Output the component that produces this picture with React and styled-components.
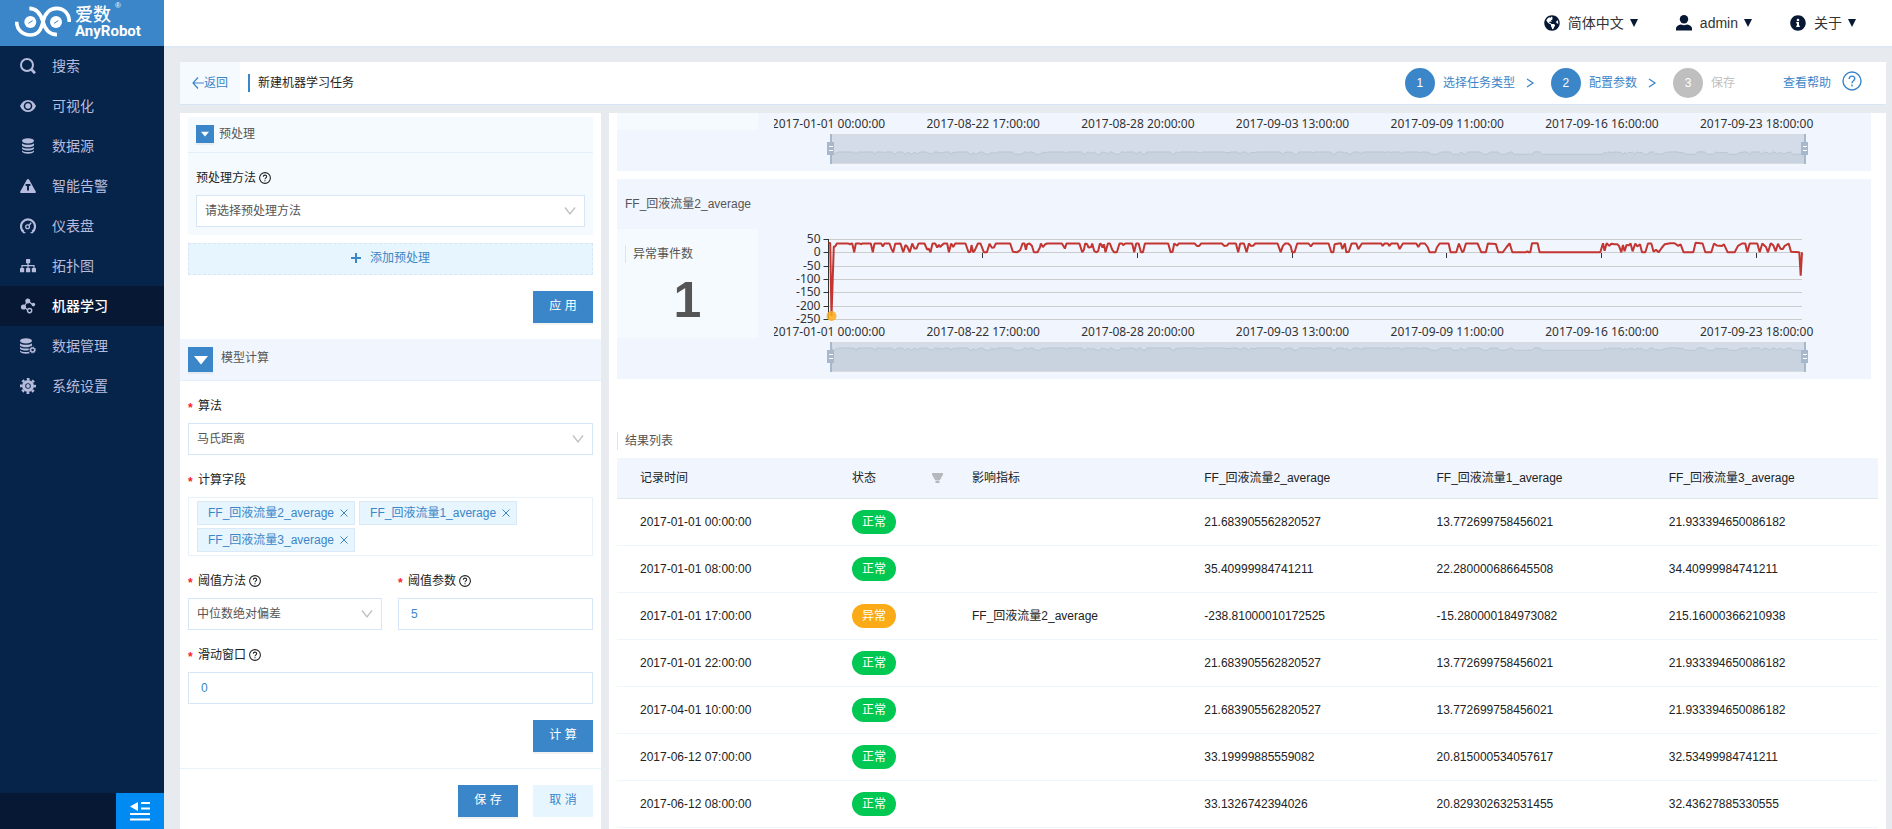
import React, { useLayoutEffect, useRef, useState } from "react";
import styled, { createGlobalStyle } from "styled-components";
import { FaGlobeAmericas, FaInfoCircle } from "react-icons/fa";

const blue = "#3b86c8";
const line = "#d6e6f7";
const pale = "#f1f6fe";
const mint = "#f4fafd";
const sky = "#e7f5fe";

const GlobalStyle = createGlobalStyle`
  *, *::before, *::after { box-sizing: border-box; }
  html, body, #root { height: 100%; }
  body {
    margin: 0;
    overflow: hidden;
    background: #e7eaef;
    color: #222;
    font: 12px/18px "Liberation Sans", "Noto Sans CJK SC", sans-serif;
  }
  button, input, select { font: inherit; margin: 0; border-radius: 0; outline: none; }
  button { cursor: pointer; }
  a { color: inherit; text-decoration: none; }
  svg { display: block; flex: none; }
`;

const Page = styled.div`
  display: grid;
  grid-template-columns: 164px minmax(0, 1fr);
  height: 100%;
`;

/* ---------- sidebar ---------- */

const Sidebar = styled.aside`
  display: flex;
  flex-direction: column;
  background: #062349;
`;

const Brand = styled.a`
  display: flex;
  gap: 4px;
  height: 46px;
  padding: 6px 0 0 15px;
  background: ${blue};
  color: #fff;
`;

const BrandText = styled.span`
  display: flex;
  flex-direction: column;
  font-weight: 700;
`;

const BrandCn = styled.span`
  display: flex;
  gap: 4px;
  font-size: 18px;
  line-height: 18px;
  font-weight: 500;
`;

const Reg = styled.sup`
  font-size: 8px;
  line-height: 1;
  margin-top: -4px;
  font-weight: 400;
`;

const BrandEn = styled.span`
  font-family: Roboto, "Liberation Sans", sans-serif;
  font-size: 15px;
  line-height: 15px;
`;

const Menu = styled.nav`
  display: flex;
  flex-direction: column;
  flex: 1;
`;

const MenuItem = styled.a`
  display: flex;
  align-items: center;
  gap: 16px;
  height: 40px;
  padding-left: 20px;
  font-size: 14px;
  line-height: 20px;
  color: ${(p) => (p.$active ? "#fff" : "#b7bcdc")};
  background: ${(p) => (p.$active ? "#061833" : "transparent")};
  font-weight: ${(p) => (p.$active ? 500 : 400)};
  svg { color: #b7bcdc; }
`;

const SidebarFoot = styled.div`
  display: flex;
  justify-content: flex-end;
  height: 36px;
  background: #061833;
`;

const Collapse = styled.button`
  display: flex;
  justify-content: center;
  align-items: center;
  width: 48px;
  border: 0;
  padding: 0;
  background: #008af2;
  color: #fff;
`;

/* ---------- main frame ---------- */

const Main = styled.main`
  display: flex;
  flex-direction: column;
  min-width: 0;
  min-height: 0;
`;

const TopBar = styled.header`
  display: flex;
  align-items: center;
  justify-content: flex-end;
  gap: 38px;
  height: 46px;
  flex: none;
  padding-right: 36px;
  background: #fff;
  box-shadow: 0 2px 0 #dfe9f4;
`;

const TopLink = styled.button`
  display: flex;
  align-items: center;
  gap: 8px;
  border: 0;
  padding: 0;
  background: none;
  font-size: 14px;
  line-height: 20px;
  color: #333;
  svg { color: #061833; }
`;

const Caret = styled.span`
  border: 4px solid transparent;
  border-top: 8px solid #061833;
  border-bottom: 0;
  margin-left: -2px;
`;

const Body = styled.div`
  display: flex;
  flex-direction: column;
  gap: 8px;
  flex: 1;
  min-height: 0;
  padding: 16px 6px 0 16px;
`;

const TaskBar = styled.div`
  display: flex;
  align-items: center;
  height: 43px;
  flex: none;
  padding-right: 24px;
  background: #fff;
  border-bottom: 1px solid ${line};
`;

const Back = styled.a`
  display: flex;
  align-items: center;
  align-self: stretch;
  width: 60px;
  padding-left: 12px;
  background: ${mint};
  color: ${blue};
`;

const TaskTitle = styled.h1`
  flex: 1;
  margin: 0 0 0 8px;
  padding-left: 8px;
  border-left: 2px solid ${blue};
  font-size: 12px;
  font-weight: 400;
  line-height: 18px;
`;

const Steps = styled.ol`
  display: flex;
  gap: 16px;
  margin: 0 48px 0 0;
  padding: 0;
  list-style: none;
`;

const Step = styled.li`
  display: flex;
  align-items: center;
  gap: 8px;
  color: ${(p) => (p.$off ? "#bfbfbf" : blue)};
  > svg { margin-left: 2px; }
`;

const StepNumber = styled.span`
  width: 30px;
  border-radius: 50%;
  background: ${(p) => (p.$off ? "#bfbfbf" : blue)};
  color: #fff;
  text-align: center;
  line-height: 30px;
`;

const HelpLink = styled.a`
  display: flex;
  align-items: center;
  gap: 11px;
  color: ${blue};
  svg { margin-bottom: 4px; }
`;

const Columns = styled.div`
  display: grid;
  grid-template-columns: 421px minmax(0, 1fr);
  gap: 8px;
  flex: 1;
  min-height: 0;
`;

/* ---------- settings column ---------- */

const Settings = styled.form`
  overflow: hidden;
  background: #fff;
  padding-top: 4px;
`;

const PreCard = styled.section`
  margin: 0 8px;
  padding-bottom: 8px;
  background: ${mint};
`;

const SectionTitle = styled.h2`
  margin: 0;
  font-size: 12px;
  font-weight: 400;
  line-height: 18px;
`;

const SectionHead = styled.header`
  display: flex;
  gap: ${(p) => (p.$large ? 8 : 5)}px;
  height: ${(p) => (p.$large ? 42 : 36)}px;
  padding: 8px;
  background: ${(p) => (p.$large ? pale : "transparent")};
  border-bottom: 1px solid #e4effa;
  color: #555;
  ${SectionTitle} { line-height: ${(p) => (p.$large ? 22 : 18)}px; }
`;

const Toggle = styled.button`
  display: grid;
  place-items: center;
  width: ${(p) => p.$size}px;
  height: ${(p) => p.$size}px;
  border: 0;
  padding: 0;
  background: ${blue};
  box-shadow: 0 2px 0 rgba(0, 0, 0, 0.05);
  color: #fff;
`;

const Field = styled.div`
  display: flex;
  flex-direction: column;
  gap: 8px;
  padding: 16px 8px 0;
  min-width: 0;
`;

const FieldLabel = styled.label`
  display: flex;
  align-items: center;
  gap: 3px;
  height: 18px;
  &::before {
    content: "*";
    display: ${(p) => (p.$required ? "block" : "none")};
    width: 7px;
    height: 14px;
    font-weight: 700;
    color: #f5222d;
  }
`;

const SelectBox = styled.div`
  display: grid;
  align-items: center;
  > * { grid-area: 1 / 1; }
  svg { justify-self: end; margin-right: 9px; color: #bfbfbf; pointer-events: none; }
`;

const Select = styled.select`
  width: 100%;
  height: 32px;
  padding: 0 24px 0 8px;
  border: 1px solid ${line};
  background: #fff;
  color: #555;
  appearance: none;
`;

const Input = styled.input`
  width: 100%;
  height: 32px;
  padding: 0 12px;
  border: 1px solid ${line};
  background: #fff;
  color: ${blue};
`;

const Tags = styled.div`
  display: flex;
  flex-wrap: wrap;
  gap: 3px 4px;
  padding: 3px 8px;
  border: 1px solid #e7f2fa;
`;

const Tag = styled.span`
  display: flex;
  align-items: center;
  height: 24px;
  padding: 0 6px 0 10px;
  gap: 6px;
  border: 1px solid #d9e9f8;
  background: ${sky};
  color: ${blue};
`;

const TagClose = styled.button`
  border: 0;
  padding: 0;
  background: none;
  color: ${blue};
`;

const HalfFields = styled.div`
  display: grid;
  grid-template-columns: 210px minmax(0, 1fr);
  > :first-child { padding-right: 8px; }
`;

const AddButton = styled.button`
  display: flex;
  align-items: center;
  justify-content: center;
  gap: 9px;
  width: calc(100% - 16px);
  height: 32px;
  margin: 8px 8px 0;
  padding-bottom: 3px;
  border: 1px dashed ${line};
  background: ${sky};
  color: ${blue};
`;

const Actions = styled.div`
  display: flex;
  justify-content: flex-end;
  gap: 15px;
  padding: 16px 8px;
  border-top: ${(p) => (p.$ruled ? `1px solid #e7f4f9` : "0")};
`;

const Button = styled.button`
  width: 60px;
  height: 32px;
  border: 0;
  padding: 0 0 3px;
  background: ${(p) => (p.$light ? sky : blue)};
  box-shadow: ${(p) => (p.$light ? "none" : "0 2px 0 rgba(0, 0, 0, 0.05)")};
  color: ${(p) => (p.$light ? blue : "#fff")};
`;

/* ---------- results column ---------- */

const Results = styled.div`
  overflow: hidden;
  padding: 0 8px;
  background: #fff;
`;

const ChartCard = styled.section`
  margin: 0 7px 8px 0;
  background: ${pale};
`;

const ChartTitle = styled.h3`
  margin: 0;
  padding: 16px 8px;
  font-size: 12px;
  font-weight: 400;
  line-height: 18px;
  color: #555;
`;

const ChartRow = styled.div`
  display: grid;
  grid-template-columns: 141px minmax(0, 1fr);
  gap: 16px;
  align-items: start;
`;

const Stat = styled.div`
  height: ${(p) => p.$height}px;
  background: ${mint};
  padding: 0 8px;
`;

const Caption = styled.h3`
  margin: ${(p) => (p.$list ? "53px 0 8px" : "0 0 12px")};
  padding-left: 7px;
  border-left: 1px solid ${line};
  font-size: 12px;
  font-weight: 400;
  line-height: 18px;
  color: #555;
`;

const StatBody = styled(Stat)`
  padding-top: 16px;
`;

const StatValue = styled.strong`
  display: block;
  text-align: center;
  font-size: 50px;
  line-height: 50px;
  color: #555;
`;

const ChartFrame = styled.div`
  min-width: 0;
  svg text {
    font: 12px "Noto Sans", sans-serif;
    fill: #333;
  }
`;

const Table = styled.table`
  width: 100%;
  table-layout: fixed;
  border-collapse: collapse;
  th, td {
    padding: 0 23px;
    text-align: left;
    font-weight: 400;
    white-space: nowrap;
  }
  th {
    height: 40px;
    background: ${pale};
    border-bottom: 1px solid #dfe6ea;
  }
  td {
    height: 47px;
    border-bottom: 1px solid #ecf6fb;
  }
`;

const Col = styled.col`
  width: ${(p) => p.$width}px;
`;

const HeadCell = styled.div`
  display: flex;
  align-items: center;
  justify-content: space-between;
  margin-right: -18px;
`;

const Pill = styled.span`
  display: block;
  width: 44px;
  border-radius: 12px;
  background: ${(p) => (p.$bad ? "#fbab17" : "#00c853")};
  color: #fff;
  text-align: center;
  line-height: 24px;
`;

/* ---------- icons ---------- */

const Icon = ({ size = 16, box = 16, children, ...rest }) => (
  <svg width={size} height={size} viewBox={`0 0 ${box} ${box}`} fill="currentColor" aria-hidden="true" {...rest}>
    {children}
  </svg>
);

const Stroke = (p) => <Icon fill="none" stroke="currentColor" {...p} />;

const SearchIcon = () => (
  <Stroke strokeWidth="2"><circle cx="7" cy="7" r="6" /><path d="M11.4 11.4l3.600 3.800" strokeWidth="2.800" /></Stroke>
);
const EyeIcon = () => (
  <Icon>
    <path fillRule="evenodd" d="M0 8c1.800-4 4.700-6 8-6s6.200 2 8 6c-1.800 4-4.700 6-8 6S1.800 12 0 8zm8-4.300a4.300 4.300 0 100 8.600 4.300 4.300 0 000-8.600z" />
    <circle cx="8" cy="8" r="2.700" />
  </Icon>
);
const Disks = () => (
  <>
    <ellipse cx="8" cy="2.800" rx="6" ry="2.600" />
    <path d="M2 5.200c1.800 2 10.200 2 12 0v2.200c-1.500 2.400-10.500 2.400-12 0zM2 9c1.800 2 10.200 2 12 0v1.800c-1.500 2.400-10.500 2.400-12 0zM2 12.400c1.800 2 10.200 2 12 0v1.400c-1.500 2.600-10.500 2.600-12 0z" />
  </>
);
const DataIcon = () => <Icon><Disks /></Icon>;
const AlertIcon = () => (
  <Icon><path fillRule="evenodd" d="M8 1c.6 0 .9.300 1.200.8l6.500 11.700c.5.900 0 1.500-.9 1.500H1.200c-.9 0-1.400-.6-.9-1.500L6.800 1.800C7.100 1.300 7.400 1 8 1zM5.600 6v2H7v4.500h2V8h1.400V6z" /></Icon>
);
const GaugeIcon = () => (
  <Stroke strokeWidth="2.200">
    <path d="M3.800 14A7 7 0 1112.200 14" />
    <circle cx="7.600" cy="8.800" r="1.900" strokeWidth="1.300" />
    <path d="M8.800 7.600l2.400-2.800" strokeWidth="1.400" />
    <path d="M3 14.600h2.400M10.600 14.600H13" strokeWidth="1.200" />
  </Stroke>
);
const TreeIcon = () => (
  <Icon>
    <rect x="6" y="1" width="4.200" height="4.200" rx=".5" />
    <rect x="0" y="10" width="4.200" height="4.200" rx=".5" />
    <rect x="6" y="10" width="4.200" height="4.200" rx=".5" />
    <rect x="11.800" y="10" width="4.200" height="4.200" rx=".5" />
    <path d="M8 5v5M2 10V7.600h12V10" fill="none" stroke="currentColor" strokeWidth="1.200" />
  </Icon>
);
const LearnIcon = () => (
  <Icon>
    <path d="M8 3L3.500 9M8 3l5.200 4M3.500 9l6 4" fill="none" stroke="currentColor" strokeWidth="1.200" />
    <circle cx="7.800" cy="3" r="2.500" />
    <circle cx="13.400" cy="6.600" r="1.800" />
    <circle cx="3.500" cy="9" r="2.600" />
    <circle cx="9.600" cy="12.600" r="2.100" fill="#061833" stroke="currentColor" strokeWidth="1.400" />
  </Icon>
);
const DataGearIcon = () => (
  <Icon>
    <g transform="translate(-2 0)"><Disks /></g>
    <circle cx="12.600" cy="12" r="4" fill="#062349" />
    <circle cx="12.600" cy="12" r="2" fill="none" stroke="currentColor" strokeWidth="1.400" />
    <circle cx="12.600" cy="12" r="3" fill="none" stroke="currentColor" strokeWidth=".9" strokeDasharray="1.200 1.150" />
  </Icon>
);
const GearIcon = () => (
  <Icon>
    <circle cx="8" cy="8" r="4.400" fill="none" stroke="currentColor" strokeWidth="3.200" />
    <circle cx="8" cy="8" r="6.900" fill="none" stroke="currentColor" strokeWidth="2.200" strokeDasharray="2.800 2.619" strokeDashoffset="1.400" />
    <circle cx="8" cy="8" r="1.900" />
  </Icon>
);
const UserIcon = () => (
  <Icon><circle cx="8" cy="4.200" r="4.200" /><path d="M0 15.600v-2.200C0 11.400 2 10 5 9.400c1.800 1 4.200 1 6 0 3 .6 5 2 5 4v2.200z" /></Icon>
);
const Help = ({ size = 12 }) => (
  <Stroke size={size} box={20} strokeWidth={size > 12 ? 1.4 : 1.8}>
    <circle cx="10" cy="10" r="9" />
    <path d="M7.200 8c0-3.800 5.600-3.600 5.600-.4 0 2.200-2.800 2.200-2.800 4.600" />
    <path d="M10 13.600v1.800" />
  </Stroke>
);
const Chevron = () => <Stroke size={10} box={10} strokeWidth="1.300"><path d="M2 1l6 4-6 4" /></Stroke>;
const Down = () => <Stroke size={12} box={12} strokeWidth="1.300"><path d="M1 2.500l5 6.500 5-6.500" /></Stroke>;
const Arrow = () => <Stroke size={12} box={12} strokeWidth="1.200"><path d="M6 0.500L1 6l5 5.500M1 6h11" /></Stroke>;
const Plus = () => <Stroke size={10} box={10} strokeWidth="2"><path d="M5 0v10M0 5h10" /></Stroke>;
const Cross = () => <Stroke size={8} box={8} strokeWidth="1"><path d="M.5 .5l7 7M7.500 .5l-7 7" /></Stroke>;
const Triangle = ({ size }) => <Icon size={size} box={14}><path d="M0 3h14L7 11.500z" /></Icon>;
const Funnel = () => (
  <Icon size={12} box={12} color="#b5b8bd"><path d="M0 1h11v1.500L8 8H3L0 2.500zM3.500 8.500h4V11h-4z" /></Icon>
);
const FoldIcon = () => (
  <svg width="20" height="20" viewBox="0 0 20 20" fill="currentColor" aria-hidden="true">
    <path d="M0 5.500L8 1v9zM11 1h9v2h-9zM11 6.500h9v2h-9zM0 12h20v2H0zM0 17.500h20v2H0z" />
  </svg>
);

const Logo = () => (
  <svg width="56" height="32" viewBox="45 18 168 96" fill="none" stroke="#fff" strokeWidth="11" aria-hidden="true">
    <path d="M50 65c0 22 16 40 40 40 26 0 34-18 39-40 5-24 20-40 41-40 22 0 38 16 38 41" />
    <path d="M88 25c22 0 34 16 41 40 6 24 18 39 42 39" />
    <circle cx="91" cy="66" r="18" fill="#fff" stroke="none" />
    <circle cx="168" cy="66" r="18" fill="#fff" stroke="none" />
    <path d="M85 70l13-8M162 70l13-8" stroke={blue} strokeWidth="3" />
  </svg>
);

/* ---------- chart ---------- */

const SPAN = 2920;
const T = 33;
const SERIES = [
  0,35,5,35,9,-238.8,16,22,20,22,25,T,60,T,64,30,68,T,71,T,77,0,82,T,94,T,98,30,101,T,127,T,133,0,138,T,158,T,163,22,168,T,183,T,
  189,12,194,0,200,32,216,T,224,0,231,27,236,22,244,0,251,T,258,14,264,14,270,T,288,T,296,10,300,14,306,0,312,T,320,T,326,18,331,28,
  335,20,340,27,346,T,356,T,361,0,368,T,374,20,380,T,411,T,420,0,426,2,429,27,434,0,439,8,448,T,456,T,466,0,475,0,483,32,490,17,
  496,18,502,T,545,T,553,2,565,0,575,8,582,T,588,T,592,10,596,30,603,T,610,25,616,0,627,0,634,18,637,T,643,20,650,30,656,T,700,T,
  709,14,714,T,753,T,761,0,766,10,770,T,776,30,780,18,788,20,791,T,797,5,804,0,809,5,814,T,818,30,822,18,826,30,831,0,838,T,844,T,
  851,10,857,0,865,0,873,T,880,T,884,27,890,T,911,T,917,0,923,T,930,T,937,0,943,0,949,T,1019,T,1026,0,1032,2,1037,T,1046,25,1050,T,
  1098,T,1105,24,1112,24,1118,T,1180,T,1187,24,1196,26,1200,T,1222,T,1229,0,1235,T,1246,T,1254,0,1261,T,1267,24,1275,26,1280,T,
  1347,T,1356,0,1363,24,1370,T,1379,T,1386,24,1391,0,1398,0,1406,T,1440,T,1447,22,1453,T,1475,T,1500,T,1508,0,1514,0,1518,30,1530,T,
  1537,34,1541,12,1549,T,1553,0,1561,2,1569,T,1583,T,1589,12,1600,T,1658,T,1662,24,1668,T,1678,T,1682,24,1688,T,1707,T,1713,12,
  1723,T,1763,T,1769,20,1775,T,1789,T,1797,20,1803,0,1820,0,1825,18,1833,T,1860,T,1866,0,1883,0,1891,T,1901,0,1905,4,1912,T,1947,T,
  1958,0,1972,0,1978,T,2002,31,2009,0,2023,0,2034,20,2043,34,2051,0,2092,0,2096,4,2101,0,2105,0,2110,34,2127,34,2133,0,2315,0,
  2323,34,2328,6,2334,34,2342,24,2348,32,2358,30,2366,30,2371,24,2378,0,2383,28,2388,4,2394,28,2400,26,2406,T,2412,4,2420,T,2426,22,
  2434,30,2440,0,2450,0,2458,T,2468,T,2475,2,2482,10,2490,0,2500,18,2508,30,2525,34,2538,34,2549,24,2556,30,2565,0,2594,0,2601,36,
  2622,T,2630,0,2648,0,2656,T,2664,26,2680,24,2686,30,2697,0,2718,0,2728,24,2740,T,2750,T,2756,0,2763,T,2786,T,2793,0,2801,T,
  2812,20,2818,0,2826,34,2834,26,2841,4,2848,32,2856,12,2862,12,2868,24,2880,T,2887,2,2912,0,2916,-88,2920,0,
];
const POINTS = [];
for (let i = 0; i < SERIES.length; i += 2) POINTS.push([SERIES[i] / SPAN, SERIES[i + 1]]);

const TIMES = [
  "2017-01-01 00:00:00", "2017-08-22 17:00:00", "2017-08-28 20:00:00", "2017-09-03 13:00:00",
  "2017-09-09 11:00:00", "2017-09-16 16:00:00", "2017-09-23 18:00:00",
];
const LEVELS = [50, 0, -50, -100, -150, -200, -250];
const TICK_STEP = 0.1589;

function Handle({ x }) {
  return (
    <g>
      <path d={`M${x} 113v30`} stroke="#a7b7cc" strokeWidth="2" />
      <rect x={x - 4} y="121" width="7" height="13" fill="#a7b7cc" />
      <path d={`M${x - 2} 125.500h4M${x - 2} 129.500h4`} stroke="#fff" />
    </g>
  );
}

function Chart({ tail = false, level }) {
  const frame = useRef(null);
  const [width, setWidth] = useState(1097);
  useLayoutEffect(() => {
    const measure = () => setWidth(frame.current.clientWidth);
    measure();
    const watcher = new ResizeObserver(measure);
    watcher.observe(frame.current);
    return () => watcher.disconnect();
  }, []);

  const top = tail ? 92 : 0;
  const left = 54.5;
  const right = width - 69;
  const px = (f) => left + f * (right - left);
  const py = (v) => Math.round(10 + ((50 - v) * 80) / 300) + 0.5;
  const curve = POINTS.map(([f, v]) => `${px(f).toFixed(1)},${(10 + ((50 - v) * 80) / 300).toFixed(1)}`).join(" ");
  const mini = POINTS.map(([f, v]) => `${(px(f) + 2).toFixed(1)},${(113 + level + (T - Math.max(v, -10)) * 0.07).toFixed(1)}`).join(" ");

  return (
    <ChartFrame ref={frame}>
      <svg width={width} height={150 - top} viewBox={`0 ${top} ${width} ${150 - top}`} role="img" aria-label="流量趋势">
        {!tail && (
          <g>
            {LEVELS.map((v) => (
              <g key={v}>
                <path d={`M${left} ${py(v)}H${right}`} stroke="#ccc" />
                <path d={`M${left - 5} ${py(v)}h5`} stroke="#333" />
                <text x={left - 8} y={py(v) + 3} textAnchor="end">{v}</text>
              </g>
            ))}
            <path d={`M${left} 10V91`} stroke="#333" />
            {TIMES.map((t, i) => <path key={t} d={`M${Math.round(px(i * TICK_STEP)) - 0.5} 24v5`} stroke="#333" />)}
            <polyline points={curve} fill="none" stroke="#c23531" strokeWidth="2" strokeLinejoin="bevel" />
            <circle cx={left + 3} cy="87" r="5" fill="#fbab17" fillOpacity=".85" />
          </g>
        )}
        {TIMES.map((t, i) => <text key={t} x={px(i * TICK_STEP)} y="107" textAnchor="middle">{t}</text>)}
        <rect x={left + 2} y="113" width={right - left + 2} height="30" fill="#d4dce9" />
        <polygon points={`${left + 2},142 ${mini} ${right + 2},142`} fill="#c8d3df" />
        <polyline points={mini} fill="none" stroke="#b9c6d4" strokeWidth="1" />
        <path d={`M${left + 2} 113.500H${right + 3}M${left + 2} 142.500H${right + 3}`} stroke="#d8dce0" />
        <Handle x={left + 2.5} />
        <Handle x={right + 3} />
      </svg>
    </ChartFrame>
  );
}

/* ---------- content ---------- */

const MENU = [
  ["搜索", SearchIcon], ["可视化", EyeIcon], ["数据源", DataIcon], ["智能告警", AlertIcon], ["仪表盘", GaugeIcon],
  ["拓扑图", TreeIcon], ["机器学习", LearnIcon], ["数据管理", DataGearIcon], ["系统设置", GearIcon],
];

const FIELDS = ["FF_回液流量2_average", "FF_回液流量1_average", "FF_回液流量3_average"];

const ROWS = [
  ["2017-01-01 00:00:00", "正常", "", "21.683905562820527", "13.772699758456021", "21.933394650086182"],
  ["2017-01-01 08:00:00", "正常", "", "35.40999984741211", "22.280000686645508", "34.40999984741211"],
  ["2017-01-01 17:00:00", "异常", "FF_回液流量2_average", "-238.81000010172525", "-15.280000184973082", "215.16000366210938"],
  ["2017-01-01 22:00:00", "正常", "", "21.683905562820527", "13.772699758456021", "21.933394650086182"],
  ["2017-04-01 10:00:00", "正常", "", "21.683905562820527", "13.772699758456021", "21.933394650086182"],
  ["2017-06-12 07:00:00", "正常", "", "33.19999885559082", "20.815000534057617", "32.53499984741211"],
  ["2017-06-12 08:00:00", "正常", "", "33.1326742394026", "20.829302632531455", "32.43627885330555"],
];

function SelectField({ id, label, value, required, help }) {
  return (
    <Field>
      <FieldLabel htmlFor={id} $required={required}>{label}{help && <Help />}</FieldLabel>
      <SelectBox>
        <Select id={id} defaultValue={value}><option>{value}</option></Select>
        <Down />
      </SelectBox>
    </Field>
  );
}

function InputField({ id, label, value }) {
  return (
    <Field>
      <FieldLabel htmlFor={id} $required>{label}<Help /></FieldLabel>
      <Input id={id} defaultValue={value} />
    </Field>
  );
}

export default function App() {
  return (
    <Page>
      <GlobalStyle />
      <Sidebar>
        <Brand href="#">
          <Logo />
          <BrandText>
            <BrandCn>爱数<Reg>®</Reg></BrandCn>
            <BrandEn>AnyRobot</BrandEn>
          </BrandText>
        </Brand>
        <Menu>
          {MENU.map(([name, Glyph]) => (
            <MenuItem key={name} href="#" $active={name === "机器学习"}><Glyph />{name}</MenuItem>
          ))}
        </Menu>
        <SidebarFoot><Collapse type="button" aria-label="收起菜单"><FoldIcon /></Collapse></SidebarFoot>
      </Sidebar>

      <Main>
        <TopBar>
          <TopLink type="button"><FaGlobeAmericas size={16} />简体中文<Caret /></TopLink>
          <TopLink type="button"><UserIcon />admin<Caret /></TopLink>
          <TopLink type="button"><FaInfoCircle size={16} />关于<Caret /></TopLink>
        </TopBar>

        <Body>
          <TaskBar>
            <Back href="#"><Arrow />返回</Back>
            <TaskTitle>新建机器学习任务</TaskTitle>
            <Steps>
              <Step><StepNumber>1</StepNumber>选择任务类型<Chevron /></Step>
              <Step><StepNumber>2</StepNumber>配置参数<Chevron /></Step>
              <Step $off><StepNumber $off>3</StepNumber>保存</Step>
            </Steps>
            <HelpLink href="#">查看帮助<Help size={20} /></HelpLink>
          </TaskBar>

          <Columns>
            <Settings>
              <PreCard>
                <SectionHead>
                  <Toggle type="button" $size={18} aria-label="折叠预处理"><Triangle size={8} /></Toggle>
                  <SectionTitle>预处理</SectionTitle>
                </SectionHead>
                <SelectField id="pre" label="预处理方法" value="请选择预处理方法" help />
              </PreCard>
              <AddButton type="button"><Plus />添加预处理</AddButton>
              <Actions><Button type="button">应 用</Button></Actions>

              <SectionHead $large>
                <Toggle type="button" $size={25} aria-label="折叠模型计算"><Triangle size={14} /></Toggle>
                <SectionTitle>模型计算</SectionTitle>
              </SectionHead>
              <SelectField id="algorithm" label="算法" value="马氏距离" required />
              <Field>
                <FieldLabel as="span" $required>计算字段</FieldLabel>
                <Tags>
                  {FIELDS.map((f) => (
                    <Tag key={f}>{f}<TagClose type="button" aria-label="移除"><Cross /></TagClose></Tag>
                  ))}
                </Tags>
              </Field>
              <HalfFields>
                <SelectField id="method" label="阈值方法" value="中位数绝对偏差" required help />
                <InputField id="param" label="阈值参数" value="5" />
              </HalfFields>
              <InputField id="window" label="滑动窗口" value="0" />
              <Actions><Button type="button">计 算</Button></Actions>
              <Actions $ruled>
                <Button type="submit">保 存</Button>
                <Button type="button" $light>取 消</Button>
              </Actions>
            </Settings>

            <Results>
              <ChartCard>
                <ChartRow><Stat $height={17} /><Chart tail level={18} /></ChartRow>
              </ChartCard>
              <ChartCard>
                <ChartTitle>FF_回液流量2_average</ChartTitle>
                <ChartRow>
                  <StatBody $height={109}>
                    <Caption>异常事件数</Caption>
                    <StatValue>1</StatValue>
                  </StatBody>
                  <Chart level={6} />
                </ChartRow>
              </ChartCard>

              <Caption $list>结果列表</Caption>
              <Table>
                <colgroup><Col $width={212} /><Col $width={120} /><col /><col /><col /><col /></colgroup>
                <thead>
                  <tr>
                    <th>记录时间</th>
                    <th><HeadCell>状态<Funnel /></HeadCell></th>
                    <th>影响指标</th>
                    {FIELDS.map((f) => <th key={f}>{f}</th>)}
                  </tr>
                </thead>
                <tbody>
                  {ROWS.map((r) => (
                    <tr key={r[0]}>
                      {r.map((c, i) => <td key={i}>{i === 1 ? <Pill $bad={c === "异常"}>{c}</Pill> : c}</td>)}
                    </tr>
                  ))}
                </tbody>
              </Table>
            </Results>
          </Columns>
        </Body>
      </Main>
    </Page>
  );
}
